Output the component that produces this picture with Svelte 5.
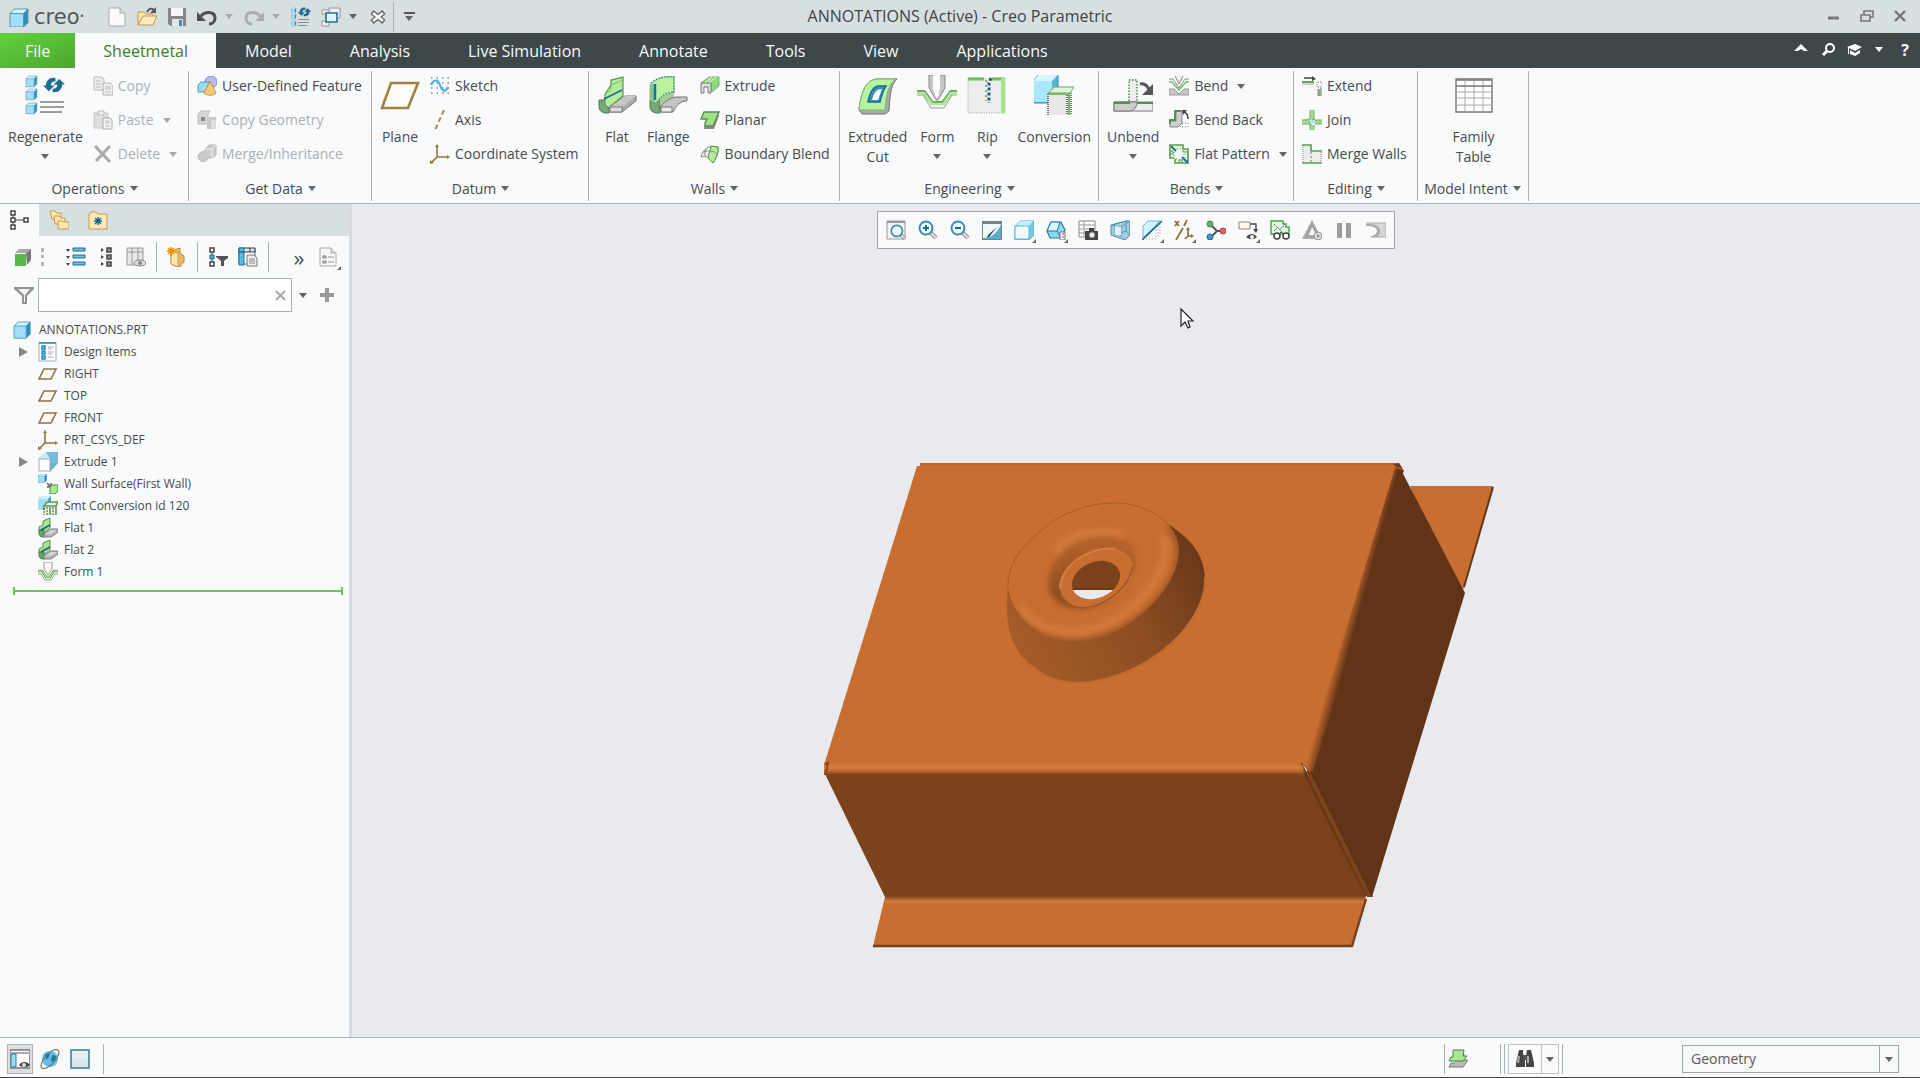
<script lang="ts">
	type Item = { icon: string; label: string; disabled?: boolean; menu?: boolean };
	type BigItem = { icon: string; lines: string[]; menu?: boolean };
	type Group = { id: string; title: string; big: BigItem[]; small: Item[] };

	const tabs = ['Model', 'Analysis', 'Live Simulation', 'Annotate', 'Tools', 'View', 'Applications'];

	const groups: Group[] = [
		{
			id: 'operations',
			title: 'Operations',
			big: [{ icon: 'regenerate', lines: ['Regenerate'], menu: true }],
			small: [
				{ icon: 'copy', label: 'Copy', disabled: true },
				{ icon: 'paste', label: 'Paste', disabled: true, menu: true },
				{ icon: 'delete', label: 'Delete', disabled: true, menu: true }
			]
		},
		{
			id: 'get-data',
			title: 'Get Data',
			big: [],
			small: [
				{ icon: 'udf', label: 'User-Defined Feature' },
				{ icon: 'copyGeom', label: 'Copy Geometry', disabled: true },
				{ icon: 'merge', label: 'Merge/Inheritance', disabled: true }
			]
		},
		{
			id: 'datum',
			title: 'Datum',
			big: [{ icon: 'plane', lines: ['Plane'] }],
			small: [
				{ icon: 'sketch', label: 'Sketch' },
				{ icon: 'axis', label: 'Axis' },
				{ icon: 'csys', label: 'Coordinate System' }
			]
		},
		{
			id: 'walls',
			title: 'Walls',
			big: [
				{ icon: 'flat', lines: ['Flat'] },
				{ icon: 'flange', lines: ['Flange'] }
			],
			small: [
				{ icon: 'extrude', label: 'Extrude' },
				{ icon: 'planar', label: 'Planar' },
				{ icon: 'blend', label: 'Boundary Blend' }
			]
		},
		{
			id: 'engineering',
			title: 'Engineering',
			big: [
				{ icon: 'cut', lines: ['Extruded', 'Cut'] },
				{ icon: 'form', lines: ['Form'], menu: true },
				{ icon: 'rip', lines: ['Rip'], menu: true },
				{ icon: 'conversion', lines: ['Conversion'] }
			],
			small: []
		},
		{
			id: 'bends',
			title: 'Bends',
			big: [{ icon: 'unbend', lines: ['Unbend'], menu: true }],
			small: [
				{ icon: 'bend', label: 'Bend', menu: true },
				{ icon: 'bendBack', label: 'Bend Back' },
				{ icon: 'flatPattern', label: 'Flat Pattern', menu: true }
			]
		},
		{
			id: 'editing',
			title: 'Editing',
			big: [],
			small: [
				{ icon: 'extend', label: 'Extend' },
				{ icon: 'join', label: 'Join' },
				{ icon: 'mergeWalls', label: 'Merge Walls' }
			]
		},
		{
			id: 'intent',
			title: 'Model Intent',
			big: [{ icon: 'family', lines: ['Family', 'Table'] }],
			small: []
		}
	];

	const tree = [
		{ icon: 'design', label: 'Design Items', expandable: true },
		{ icon: 'planeSmall', label: 'RIGHT' },
		{ icon: 'planeSmall', label: 'TOP' },
		{ icon: 'planeSmall', label: 'FRONT' },
		{ icon: 'csys', label: 'PRT_CSYS_DEF' },
		{ icon: 'solid', label: 'Extrude 1', expandable: true },
		{ icon: 'wall', label: 'Wall Surface(First Wall)' },
		{ icon: 'conversionSmall', label: 'Smt Conversion id 120' },
		{ icon: 'flatSmall', label: 'Flat 1' },
		{ icon: 'flatSmall', label: 'Flat 2' },
		{ icon: 'formSmall', label: 'Form 1' }
	];

	const viewTools = [
		{ icon: 'refit', label: 'Refit' },
		{ icon: 'zoomIn', label: 'Zoom In' },
		{ icon: 'zoomOut', label: 'Zoom Out' },
		{ icon: 'repaint', label: 'Repaint' },
		{ icon: 'shaded', label: 'Display Style', corner: true },
		{ icon: 'saved', label: 'Saved Orientations', corner: true },
		{ icon: 'manager', label: 'View Manager' },
		{ icon: 'perspective', label: 'Perspective View' },
		{ icon: 'section', label: 'Section', corner: true },
		{ icon: 'datums', label: 'Datum Display Filters', corner: true },
		{ icon: 'spin', label: 'Spin Center' },
		{ icon: 'anno', label: 'Annotation Display', corner: true },
		{ icon: 'preview', label: 'Flat Pattern Preview' },
		{ icon: 'simulate', label: 'Simulate' },
		{ icon: 'pause', label: 'Pause' },
		{ icon: 'region', label: 'Fluid Region' }
	];

	// icons drawn on a 40 unit grid, the others use 20
	const large = ['regenerate', 'plane', 'flat', 'flange', 'cut', 'form', 'rip', 'conversion', 'unbend', 'family'];

	const cube = (x: number, y: number, s: number) =>
		`<g transform="translate(${x} ${y}) scale(${s})"><path d="M0 3 3 0H12L9 3Z" fill="#d6f3fd"/><path d="M9 3 12 0V9L9 12Z" fill="#2e8cba"/><path d="M0 3H9V12H0Z" fill="#9fe0f8"/><path d="M0 3 3 0H12V9L9 12H0ZM0 3H9V12M9 3 12 0" fill="none" stroke="#4790b3" stroke-width=".6"/></g>`;
	const swirl = (x: number, y: number, s: number) =>
		`<g transform="translate(${x} ${y}) scale(${s})" fill="#1d6b8f"><path d="M1 9C1 4 5 0 11 1V5C8 4 6 6 6 9H10L4 15-2 9Z"/><path d="M18 8C18 13 14 17 8 16V12C11 13 13 11 13 8H9L15 2 21 8Z"/></g>`;
	const magnifier = `<path d="m12 12 6 6" stroke="#8d8d8d" stroke-width="4"/><path d="m12 12 6 6" stroke="#e5e5e5" stroke-width="2"/><circle cx="8" cy="8" r="6.5" fill="#eefaff" stroke="#3d8cae" stroke-width="2"/>`;

	const icons: Record<string, string> = {
		logo: cube(1, 2, 1.5),
		part: cube(2, 2, 1.35),
		newFile: '<path d="M2 1H13L18 6V19H2Z" fill="#fafafa" stroke="#a9a9a9"/><path d="M13 1V6H18" fill="#ddd" stroke="#a9a9a9"/>',
		open: '<path d="M1 18V5H7L9 7H16V9" fill="#ffe3a3" stroke="#c0964c"/><path d="M1 18 6 9H20L16 18Z" fill="#ffecc2" stroke="#c0964c"/><path d="M10 5C12 1 15 1 17 3" fill="none" stroke="#555" stroke-width="2"/><path d="M19 0V6H13Z" fill="#555"/>',
		save: '<path d="M1 1H19V19H4L1 17Z" fill="#868686"/><path d="M4 1H16V9H4Z" fill="#f3f5f6"/><path d="M5 12H16V19H5Z" fill="#d8eaf2"/><path d="M12 13H15V19H12Z" fill="#4f87a4"/>',
		undo: '<path d="M4 9C8 4 18 4 18 11 18 15 15 17 12 17" fill="none" stroke="#4b4f51" stroke-width="3"/><path d="M0 5V14H9Z" fill="#4b4f51"/>',
		redo: '<path d="M16 9C12 4 2 4 2 11 2 15 5 17 8 17" fill="none" stroke="#a9adaf" stroke-width="3"/><path d="M20 5V14H11Z" fill="#a9adaf"/>',
		regenSmall: cube(0, 1, 0.42) + cube(0, 7, 0.42) + cube(0, 14, 0.42) + swirl(8, 0, 0.58) + '<path d="M7 12.5H18M7 15.5H18M7 18.5H16" stroke="#8d8d8d"/>',
		windows: '<path d="M8 1H19V11H8Z" fill="#eee" stroke="#999"/><path d="M1 3H8V7H1ZM1 14H8V19H1Z" fill="#eee" stroke="#999"/><path d="M5 6H16V15H5Z" fill="#dff4fb" stroke="#246f91" stroke-width="1.6"/>',
		closeWin: '<path d="M4 5 16 15M16 5 4 15" stroke="#666" stroke-width="5"/><path d="M5 6 15 14M15 6 5 14" stroke="#f5f7f7" stroke-width="2.6"/>',
		regenerate:
			cube(1, 1, 0.9) + cube(1, 14, 0.9) + cube(1, 28, 0.9) + swirl(20, 2, 0.95) + '<path d="M15 27H39M15 32H39M15 37H37" stroke="#9d9d9d" stroke-width="2"/>',
		copy: '<path d="M1 1H9L11 3V14H1Z" fill="#eee" stroke="#bbb"/><path d="M3 5H8M3 8H8M3 11H8" stroke="#bbb"/><path d="M10 7H17L20 10V19H10Z" fill="#eee" stroke="#b0b0b0"/><path d="M12 11H18M12 13H18M12 16H18" stroke="#bbb"/>',
		paste: '<path d="M1 3H15V18H1Z" fill="#ddd" stroke="#c5c5c5"/><path d="M5 1H11V5H5Z" fill="#eee" stroke="#bbb"/><path d="M10 8H17L19 10V19H10Z" fill="#f4f4f4" stroke="#aaa"/><path d="M12 11H17M12 13H17M12 16H17" stroke="#bbb"/>',
		delete: '<path d="m2 2 15 16M17 2 3 17" stroke="#aaa" stroke-width="3"/>',
		udf: '<circle cx="14" cy="6" r="6" fill="#b5bdf0" stroke="#8288c0"/><path d="M1 9 4 6H12L9 16H1Z" fill="#9bdcf4" stroke="#4a9cc0"/><path d="M13 5 19 17C16 20 10 20 7 17Z" fill="#f4c87a" stroke="#c59240"/>',
		copyGeom: '<path d="M1 4 4 1H13L11 4V14H1Z" fill="#d5d5d5" stroke="#bbb"/><path d="M4 7H8V11H4Z" fill="#888"/><path d="M10 10 12 7H19V19H10Z" fill="#c9c9c9"/><path d="M14 10H19V19H14Z" fill="#dedede"/>',
		merge: '<path d="M8 5 12 1H19V11L15 14H11A5 5 0 1 1 8 8Z" fill="#ccc" stroke="#b5b5b5"/><path d="M8 5H15V14M15 5 19 1" stroke="#eee" fill="none"/>',
		plane: '<path d="M11 8H38L28 33H2Z" fill="#fdfbf5" stroke="#a18144" stroke-width="2.6"/>',
		planeSmall: '<path d="M6 5H18L13 15H1Z" fill="#fdfbf5" stroke="#8e7449" stroke-width="1.6"/>',
		sketch: '<path d="M1 2H19M1 7H19M1 12H19M1 17H19" stroke="#848b90" stroke-width="1.5" stroke-dasharray="1.5 4"/><path d="M1 9C4 3 8 3 10 9S15 17 18 11" fill="none" stroke="#43b3e4" stroke-width="2.2"/>',
		axis: '<path d="M14 0 5 20" stroke="#a88b51" stroke-width="2" stroke-dasharray="5 3"/>',
		csys: '<path d="M7 2V13H18M7 13 2 18" fill="none" stroke="#96743c" stroke-width="1.6"/><path d="M7 0 9 3H5ZM20 13 17 11V15ZM0 20V16L4 19Z" fill="#96743c"/>',
		flat: '<path d="M2 25H12V38H10C4 38 2 35 2 31Z" fill="#79a878" stroke="#4b7550"/><path d="M8 19 14 10V5L26 2V21L12 33 8 30Z" fill="#b2ed9c" stroke="#62985d" stroke-width="1.3"/><path d="M8 19 14 15 14 10 26 5" fill="none" stroke="#77bd68"/><path d="M7 24 25 15" stroke="#1a6c9a" stroke-width="1.8"/><path d="M13 32 28 21H39V26L25 37H13Z" fill="#aaa" stroke="#777"/><path d="M13 32 28 21H39L25 32Z" fill="#c7c7c7"/><path d="M13 32H25V37H13Z" fill="#ddd" stroke="#777"/><path d="M13 31 26 21" stroke="#476d46" stroke-dasharray="1 2"/>',
		flatSmall: '<path d="M1 9 5 7V3L12 0V10L6 15 1 13Z" fill="#a6e690" stroke="#568d52"/><path d="M1 12H6V19H5C2 19 1 17 1 15Z" fill="#6fa36c" stroke="#4b7550"/><path d="m3 12 9-5" stroke="#175f87" stroke-width="1.5"/><path d="M6 16 13 11H20V14L13 19H6Z" fill="#b5b5b5" stroke="#808080"/><path d="M7 16 13 12H19L13 16Z" fill="#d4d4d4"/>',
		flange: '<path d="M2 25H12V38H10C4 38 2 35 2 31Z" fill="#79a878" stroke="#4b7550"/><path d="M2 10C8 3 16 1 26 2V18C19 18 13 22 9 28L2 25Z" fill="#b9f19f" stroke="#86b880"/><path d="M2 10 7 9V26H2Z" fill="#8cc282"/><path d="M12 25C17 19 21 18 26 18V26L12 34Z" fill="#a3cd95"/><path d="M7 9V25" stroke="#0877a8" stroke-width="2.5"/><path d="M9 27C15 19 20 17 26 17M3 8C10 2 18 1 26 2V18" fill="none" stroke="#126990" stroke-dasharray="1 2" stroke-width="1.5"/><path d="M12 32C18 25 23 23 28 22H39V26C32 26 28 31 25 37H13Z" fill="#c3c3c3" stroke="#777"/><path d="M13 32H24V37H13Z" fill="#ececec" stroke="#777"/>',
		extrude: '<path d="M1 7 9 1H19V10L12 16 11 12V7Z" fill="#8bdc79" stroke="#82ad7a"/><path d="M1 7H11V17H8V11H4V17H1Z" fill="#ddd" stroke="#777"/><path d="m5 7 7-6M9 7 16 1" stroke="#e5fbd9"/>',
		planar: '<path d="M4 16H13L19 3V6L14 19H4Z" fill="#8c8c8c"/><path d="M4 2H19L13 16H5V13L7 9H1Z" fill="#a1df89" stroke="#578f50" stroke-width="1.4"/>',
		blend: '<path d="M1 13C3 5 8 1 18 3 19 9 16 14 13 19 10 14 5 11 1 13Z" fill="#f2f5f1" stroke="#888"/><path d="M11 2 18 3C19 9 16 14 13 19L8 14C8 9 11 7 11 2Z" fill="#b4ea9f" stroke="#4e9444"/><path d="M3 8C9 6 14 7 17 10M6 5C4 8 5 10 5 12" fill="none" stroke="#888"/>',
		cut: '<path d="M1 35C3 17 8 4 20 4H39C32 10 32 23 31 36L27 39H4Z" fill="#aaa" stroke="#777"/><path d="M1 35C3 17 8 4 20 4H38C29 10 28 24 27 35Z" fill="#b9f29f" stroke="#77b36d"/><path d="M10 27C12 17 15 11 21 11H28C24 17 23 22 22 27Z" fill="#3892bd" stroke="#166b91" stroke-width="1.5"/><path d="M14 25C16 17 19 14 24 14L20 25Z" fill="#fafcff"/>',
		form: '<path d="M12 0V13L19 25H21L28 13V0Z" fill="#c6c6c6" stroke="#888"/><path d="M16 0H23V14L21 23H19L16 14Z" fill="#fafafa"/><path d="M0 20H6L14 33H27L35 20H40" fill="none" stroke="#999"/><path d="M0 17H7L15 28H26L34 17H40" fill="none" stroke="#6d9c65" stroke-width="4"/><path d="M0 18H7L15 29H26L34 18H40" fill="none" stroke="#abed90" stroke-width="2.6"/>',
		formSmall: '<path d="M6 0V7L10 13 14 7V0Z" fill="#fafafa" stroke="#999"/><path d="M0 12H3L7 18H13L17 12H20" fill="none" stroke="#999"/><path d="M0 9H4L8 15H12L16 9H20" fill="none" stroke="#6faa63" stroke-width="2.6"/><path d="M0 9H4L8 15H12L16 9H20" fill="none" stroke="#a7e58e"/>',
		rip: '<path d="M1 3H18L20 6 24 3H38V38H1Z" fill="#ededed" stroke="#969696" stroke-dasharray="1 1.5"/><path d="M1 4H17M25 4H38" stroke="#72bd61" stroke-width="3"/><path d="M36 3V38" stroke="#9ee887" stroke-width="4"/><path d="M19 5V26" stroke="#7fb477" stroke-width="2" stroke-dasharray="2 3"/><path d="M24 3 22 8V28" stroke="#1a6382" fill="none" stroke-width="3" stroke-dasharray="3 2"/>',
		conversion: '<path d="M0 5 4 0H24V23L18 28H0Z" fill="#58b4db" stroke="#3183ab"/><path d="M0 6H18V27H0Z" fill="#a7e7ff"/><path d="M0 5 4 0H24L18 6H0Z" fill="#d7f5ff"/><path d="M14 40V19L20 12H40L36 18V40Z" fill="#e7e7e7"/><path d="M14 40V19M33 20V40M37 18V40" stroke="#444" stroke-width="1.4" stroke-dasharray="1 1"/><path d="M14 19 20 12H40L36 18H14Z" fill="#e0f6d6" stroke="#6ea364"/><path d="M15 19H35V40" fill="none" stroke="#77bc69" stroke-width="2"/>',
		conversionSmall: '<path d="M0 0H13V11L10 14H0Z" fill="#4ba7cf"/><path d="M0 3H10V14H0Z" fill="#9fe0f8"/><path d="M0 0H13L10 3H0Z" fill="#cdf1fc"/><path d="M6 19V10L9 6H20L18 10V19Z" fill="#eaf3e7"/><path d="M6 10 9 6H20L18 10ZM6 10V14M12 11V19M18 10V19" fill="none" stroke="#5c9c50" stroke-width="1.6"/><path d="M6 12V19M9 11V19M15 11V19" stroke="#444" stroke-dasharray="2 1"/>',
		unbend: '<path d="M16 5H24V27H16Z" fill="#eee" stroke="#51794a" stroke-width="1.4" stroke-dasharray="1.5 1.5"/><path d="M1 27H40V36H1Z" fill="#ededed" stroke="#777"/><path d="M1 27H24C24 32 21 36 16 36H1Z" fill="#ccc" stroke="#777"/><path d="M1 28H17M24 28H40" stroke="#55914b" stroke-width="2"/><path d="M27 9C32 8 35 11 37 17" fill="none" stroke="#555" stroke-width="3"/><path d="M40 9V20H29Z" fill="#555"/>',
		bend: '<path d="M6 0 10 8 14 0" fill="#eee" stroke="#888"/><path d="M0 3H4L10 12 16 3H20" fill="none" stroke="#8b8b8b"/><path d="M0 6H3L10 14 17 6H20" fill="none" stroke="#77c35e" stroke-width="1.6"/><path d="M0 19V13H5L10 18 15 13H20V19Z" fill="#c5c5c5" stroke="#999"/>',
		bendBack: '<path d="M1 15V11H7V1H13V13L9 17H1Z" fill="#cecece" stroke="#888"/><path d="M1 14V10H6V1H12" fill="none" stroke="#4d9548" stroke-width="2"/><path d="M13 13H19V17H11Z" fill="none" stroke="#777" stroke-dasharray="1 2"/><path d="M15 2C18 3 19 6 19 9" fill="none" stroke="#444" stroke-width="1.5"/><path d="M13 0H18L14 5Z" fill="#444"/>',
		flatPattern: '<path d="M1 1H14V5H19V19H6V14H1Z" fill="#e6f5dd" stroke="#55a146" stroke-width="1.6"/><path d="M5 5H15V15H5Z" fill="#f3f6f7" stroke="#777" stroke-dasharray="1 2"/><path d="M1 7H4V10H1M10 19V16H13V19M14 5V8H19" stroke="#55a146"/><path d="m2 2 5 5M13 13 19 19" stroke="#1472a3" stroke-width="1.8"/>',
		extend: '<path d="M0 6H12V9H0Z" fill="#d0d0d0"/><path d="M0 6H12" stroke="#5eaa4d" stroke-width="2"/><path d="M2 2H11" stroke="#444" stroke-width="1.5"/><path d="m10 0 4 3-4 2Z" fill="#444"/><path d="M15 6V11H20V6Z" fill="none" stroke="#777" stroke-dasharray="1 1"/><path d="M17 13V20" stroke="#999" stroke-width="3"/><path d="M19 12V20" stroke="#4f9c3e"/>',
		join: '<path d="M10 0V7C10 11 7 12 0 12M0 12H20M10 7V20" fill="none" stroke="#8e9d89" stroke-width="5"/><path d="M10 0V7C10 11 7 12 0 12M0 12H20M10 7V20" fill="none" stroke="#99e47e" stroke-width="3"/><path d="M8 10H13V15H8Z" fill="#e6f4f8"/><path d="M7 13 13 8M8 15 14 10" stroke="#197cad" stroke-dasharray="1 1"/>',
		mergeWalls: '<path d="M1 1H9V8H20V19H1Z" fill="#ededed"/><path d="M1 1V19M19 8V19" stroke="#8b8b8b" stroke-dasharray="1 1"/><path d="M0 1H9V7H20M0 19H20" stroke="#57a049" stroke-width="1.6"/><path d="M9 8V19" stroke="#777" stroke-dasharray="2 2"/>',
		family: '<path d="M2 4H38V37H2Z" fill="#fff" stroke="#777" stroke-width="1.4"/><path d="M2 17H38M2 23H38M2 30H38M11 4V37M20 4V37M29 4V37" stroke="#aaa"/><path d="M2 5H38M2 11H38" stroke="#777" stroke-width="1.6"/>',
		modelTree: '<path d="M1 1H5V5H1ZM1 8H5V12H1ZM1 15H5V19H1ZM14 8H18V12H14Z" fill="#fff" stroke="#444" stroke-width="1.5"/><path d="M3 5V8M3 12V15M5 10H14" stroke="#444"/>',
		folders: '<g fill="#ffe6a9" stroke="#c29a4e"><path d="M1 1H6L8 3H12V9H3Z"/><path d="M5 6H10L12 8H16V14H6Z"/><path d="M9 11H13L15 12H20V19H9Z"/></g>',
		favorites: '<path d="M1 5 3 2H8L10 4H19V19H1Z" fill="#ffe9b5" stroke="#c29a4e"/><path d="M10 7V15M6 11H14M7 8 13 14M13 8 7 14" stroke="#16698e" stroke-width="1.4"/>',
		greenCube: '<path d="M2 7H13V19H2Z" fill="#54b948"/><path d="M2 6 6 2H18L13 6Z" fill="#aaa"/><path d="M13 6 18 2V13L14 18Z" fill="#777"/>',
		list: '<path d="M0 2H4L2 5ZM0 9H4L2 12ZM0 16H4L2 19Z" fill="#444"/><path d="M7 1H19V4H7ZM7 8H19V11H7ZM7 15H19V18H7Z" fill="#6bc3e7" stroke="#226988"/>',
		collapse: '<path d="m5 1 3 2-3 2ZM5 8 8 10 5 12ZM5 15 8 17 5 19Z" fill="#444"/><path d="M11 1H15V5H11ZM11 8H15V12H11ZM11 15H15V19H11Z" fill="#999" stroke="#444" stroke-width="1.5"/>',
		columns: '<path d="M1 1H17V18H1Z" fill="#e7e7e7" stroke="#999"/><path d="M1 5H17M6 1V18M12 1V18" stroke="#999"/><ellipse cx="14" cy="16" rx="6" ry="3" fill="#ddd" stroke="#888"/><circle cx="14" cy="16" r="2" fill="#888"/>',
		settings: '<path d="M4 4 13 1V6L17 9V15L14 17V19L10 20 4 17Z" fill="#e5ba68" stroke="#bd8b36"/><path d="M4 4 11 6V20L4 17Z" fill="#ffe6aa" stroke="#cc9f52"/><path d="M4 0V9M0 4H8M1 1 7 7M7 1 1 7" stroke="#f18f00" stroke-width="1.5"/>',
		treeFilter: '<path d="M2 1H6V5H2ZM2 15H6V19H2Z" fill="#fff" stroke="#444" stroke-width="1.5"/><path d="M2 8H6V12H2Z" fill="#48b4df" stroke="#236987"/><path d="M4 5V8M4 12V15" stroke="#444"/><path d="M8 9H20V11L16 14V19H13V14L8 10Z" fill="#555"/>',
		treeColumns: '<path d="M1 2H17V17H1Z" fill="#fff" stroke="#2c7896"/><path d="M1 1H17V5H1Z" fill="#d7ecf4" stroke="#333"/><path d="M1 1H6V18H1Z" fill="#53bcea" stroke="#226c8c"/><path d="M12 1V5M1 5H6" stroke="#333"/><path d="M9 8H16L19 11V19H9Z" fill="#eee" stroke="#777"/><path d="M11 12H17M11 14H17M11 16H17" stroke="#888"/>',
		doc: '<path d="M1 1H12L17 6V19H1Z" fill="#f7f7f7" stroke="#aaa"/><path d="M12 1V6H17" fill="#ddd" stroke="#aaa"/><path d="M4 9H7V11H4ZM4 14H7V16H4Z" fill="none" stroke="#777"/><path d="M9 10H15M9 15H15" stroke="#999"/>',
		filter: '<path d="M0 2H20V4L13 11V19H8V11L0 4Z" fill="#929292"/><path d="M4 4H16L11 10V17H10V10Z" fill="#f3f3f3"/>',
		design: '<path d="M1 0H18V19H1Z" fill="#fff" stroke="#9db2bb"/><path d="M1 1H18" stroke="#4f9ebc" stroke-width="2"/><path d="M4 4H7V7H4ZM4 9H7V12H4ZM4 14H7V17H4Z" fill="#7fd2f1" stroke="#188dbc" stroke-width="1.4"/><path d="M10 5H16M10 7H14M10 10H16M10 12H14M10 15H16" stroke="#aaa"/>',
		solid: '<path d="M0 6 8 0H20L12 7H0Z" fill="#c8eafa"/><path d="M12 7 20 0V11L12 20Z" fill="#63b1d1"/><path d="M8 0H20V11H12V7Z" fill="#78bbd8"/><path d="M1 7H12V19H1Z" fill="#fcfcfc" stroke="#aaa"/>',
		wall: cube(0, 0, 0.72) + '<path d="M9 9 12 12M13 9V13H9" fill="none" stroke="#555" stroke-width="1.4"/><path d="M12 13 14 11H20V17L17 20H12Z" fill="#a9e88e" stroke="#4b8e43"/>',
		refit: '<path d="M1 1H19V19H1Z" fill="#f4f4f4" stroke="#999"/><path d="M1 2H19" stroke="#999" stroke-width="2"/><g transform="translate(4 4) scale(.86)">' + magnifier + '</g>',
		zoomIn: magnifier + '<path d="M5 8H11M8 5V11" stroke="#176b94" stroke-width="2"/>',
		zoomOut: magnifier + '<path d="M5 8H11" stroke="#176b94" stroke-width="2"/>',
		repaint: '<path d="M0 1H20V20H0Z" fill="#7a8385"/><path d="M1 4H19V19H1Z" fill="#58afca"/><path d="M1 4H19C16 12 10 18 1 18Z" fill="#f0fafd"/><path d="M15 7 7 17 5 18 6 15Z" fill="#174d68"/>',
		shaded: '<path d="M1 6 6 1H20V15L15 20H1Z" fill="#7ac6df" stroke="#58abc8"/><path d="M1 6 6 1H19L15 6Z" fill="#c5eefa"/><path d="M1 6H15V19H1Z" fill="#eefaff" stroke="#63b8d6"/>',
		saved: '<path d="M1 11 5 2H15L19 10 15 18H4Z" fill="#8bd5ef" stroke="#277da0" stroke-width="1.2"/><path d="M1 11H11L14 2H5Z" fill="#ddf5fd" stroke="#277da0"/><path d="M11 11 15 18" stroke="#277da0"/><path d="M14 12H19V20H14Z" fill="#f4f4f4" stroke="#777"/><path d="M16 14H18M16 17H18" stroke="#666"/>',
		manager: '<path d="M1 1H17V17H1Z" fill="#fff" stroke="#888"/><path d="M6 1V17M1 5H17M1 9H17M1 13H17" stroke="#999"/><path d="M7 11H20V20H7ZM11 8H16V11H11Z" fill="#444"/><circle cx="14" cy="15" r="3" fill="#eee" stroke="#777"/>',
		perspective: '<path d="M1 5 16 1H20V15L15 20 1 15Z" fill="#9ccddf" stroke="#4c8ca6"/><path d="M1 5 11 7V17M11 7 20 1M5 4V15M5 4 16 1V11L5 15M16 11 20 15" fill="none" stroke="#4c8ca6" stroke-width=".8"/><path d="M5 6 11 7V15H5Z" fill="#e0f4fb"/>',
		section: '<path d="M1 6 6 1H18L1 18Z" fill="#d5f3fc" stroke="#69b7d7"/><path d="M4 19H14V7M16 16V5M18 14V3" fill="none" stroke="#999" stroke-dasharray="1 2"/><path d="M0 20 20 1" stroke="#176287" stroke-width="1.6"/>',
		datums: '<path d="M1 1 5 6M5 1 1 6M13 0 10 6M9 8 2 20M14 9V16H18M14 16 11 19" fill="none" stroke="#8d6c31" stroke-width="1.7" /><path d="M14 7 16 10H12ZM20 16 17 14V18Z" fill="#8d6c31"/>',
		spin: '<path d="M4 4 11 11H18M11 11 4 18" fill="none" stroke="#555" stroke-width="1.8"/><circle cx="4" cy="4" r="3" fill="#6aaf67" stroke="#48824a"/><circle cx="17" cy="11" r="3" fill="#db6465" stroke="#af4546"/><circle cx="4" cy="17" r="3" fill="#4a97bb" stroke="#226b93"/>',
		anno: '<path d="M1 2H12V9H1Z" fill="#fffae3" stroke="#888"/><path d="M12 4H18V11" fill="none" stroke="#444" stroke-width="1.3"/><path d="M15 9H20L18 13ZM8 17C12 13 16 13 19 17 15 20 12 20 8 17Z" fill="#444"/><circle cx="14" cy="17" r="2" fill="#eee"/>',
		preview: '<path d="M1 1H13V4H16V7H19V14H1Z" fill="#e8f9e0" stroke="#46a444" stroke-width="1.4"/><path d="M4 4 12 12M14 6 9 10M4 11 8 7" stroke="#39728b" stroke-dasharray="2 1"/><circle cx="7" cy="16" r="3" fill="#fff" stroke="#444" stroke-width="1.5"/><circle cx="16" cy="16" r="3" fill="#fff" stroke="#444" stroke-width="1.5"/><path d="M9 14 11 12 14 14" stroke="#444" fill="none"/>',
		simulate: '<path d="M10 0 20 19H0Z" fill="#aaa"/><path d="M10 5 16 16H5Z" fill="#ddd" stroke="#888"/><path d="m10 9 3 6H8Z" fill="#fff"/><circle cx="16" cy="16" r="4" fill="#ddd" stroke="#999"/><path d="m15 14 3 2-3 2Z" fill="#888"/>',
		pause: '<path d="M3 3H8V18H3ZM12 3H17V18H12Z" fill="#9c9c9c"/>',
		region: '<path d="M0 3H20V17H4Z" fill="#d5d6d7"/><path d="M0 3H20V17H5" stroke="#b0b0b0"/><path d="M0 6C8 6 12 8 12 11 12 14 7 16 2 17L0 17Z" fill="#f8fafc"/><path d="M0 6C8 6 11 8 11 11 11 14 8 16 4 17H10C13 16 14 13 14 11 14 7 10 4 3 4H0Z" fill="#a9a9a9"/>',
		panels: '<path d="M0 1H20V19H0Z" fill="#fff" stroke="#777" stroke-width="1.5"/><path d="M0 4H20" stroke="#aaa" stroke-width="2"/><path d="M1 5H6V18H1Z" fill="#9cdcf2" stroke="#237ca1"/><path d="M9 16C12 12 17 12 20 16 17 19 12 19 9 16Z" fill="#444"/><circle cx="14" cy="16" r="2" fill="#ddd"/>',
		globe: '<circle cx="10" cy="10" r="8" fill="#63bce5"/><path d="M5 5 10 4 9 8 6 11ZM12 6 16 7 15 13 11 12Z" fill="#1b759f"/><ellipse cx="10" cy="10" rx="12" ry="5" transform="rotate(-48 10 10)" stroke="#777" stroke-width="1.2"/>',
		blank: '<path d="M1 1H19V19H1Z" fill="#dce8ef" stroke="#37799a" stroke-width="1.5"/><path d="M2 2H18V9H2Z" fill="#e6eff4"/>',
		regenState: '<path d="M5 5H16L15 11H20L15 18H1L3 14H7" fill="#b9bab7" stroke="#777"/><path d="M5 1H16L15 7H19L15 12H1L3 8H5Z" fill="#a8e892" stroke="#438641"/>',
		find: '<path d="M4 1H8V5L10 7V18H1V14ZM12 1H16L19 14V18H11V7Z" fill="#444"/><path d="M8 6H12V11H8Z" fill="#555"/><path d="M4 7 3 14M13 7V14" stroke="#aaa" stroke-width="2"/>'
	};
</script>

{#snippet icon(name: string, size = 20)}
	<svg
		class="icon"
		width={size}
		height={size}
		viewBox={large.includes(name) ? '0 0 40 40' : '0 0 20 20'}
		fill="none"
		aria-hidden="true"
	>
		{@html icons[name]}
	</svg>
{/snippet}

{#snippet quick(name: string, label: string)}
	<button type="button" class="tool" aria-label={label}>{@render icon(name)}</button>
{/snippet}

<div class="app">
	<header class="titlebar">
		<div class="quick-access">
			<span class="logo">{@render icon('logo')}creo<sup>•</sup></span>
			{@render quick('newFile', 'New')}
			{@render quick('open', 'Open')}
			{@render quick('save', 'Save')}
			{@render quick('undo', 'Undo')}
			<span class="arrow faint"></span>
			{@render quick('redo', 'Redo')}
			<span class="arrow faint"></span>
			{@render quick('regenSmall', 'Regenerate model')}
			{@render quick('windows', 'Windows')}
			<span class="arrow"></span>
			{@render quick('closeWin', 'Close window')}
			<span class="rule"></span>
			<button type="button" class="customize" aria-label="Customize toolbar"><span class="arrow"></span></button>
		</div>
		<h1>ANNOTATIONS (Active) - Creo Parametric</h1>
		<div class="window-controls">
			<button type="button" class="tool" aria-label="Minimize">
				<svg width="14" height="14" viewBox="0 0 14 14"><path d="M1 9H12" stroke="#777" stroke-width="3" /></svg>
			</button>
			<button type="button" class="tool" aria-label="Restore">
				<svg width="14" height="14" viewBox="0 0 14 14" fill="none" stroke="#777" stroke-width="1.6">
					<path d="M4 6V2H13V8H10M1 6H10V12H1Z" />
				</svg>
			</button>
			<button type="button" class="tool" aria-label="Close">
				<svg width="14" height="14" viewBox="0 0 14 14"><path d="M2 2 12 12M12 2 2 12" stroke="#777" stroke-width="2.4" /></svg>
			</button>
		</div>
	</header>

	<nav class="tabs">
		<button type="button" class="tab file">File</button>
		<button type="button" class="tab active">Sheetmetal</button>
		{#each tabs as tab}
			<button type="button" class="tab">{tab}</button>
		{/each}
		<div class="tab-tools">
			<button type="button" class="tool" aria-label="Minimize ribbon">
				<svg width="14" height="14" viewBox="0 0 14 14"><path d="M0 8 7 1 14 8H10L7 6 4 8Z" fill="#fff" /></svg>
			</button>
			<button type="button" class="tool" aria-label="Search commands">
				<svg width="14" height="14" viewBox="0 0 14 14" fill="none" stroke="#fff">
					<circle cx="8" cy="5" r="4" stroke-width="2" /><path d="M5 8 1 12" stroke-width="3" />
				</svg>
			</button>
			<button type="button" class="tool learn" aria-label="Learning">
				<svg width="16" height="14" viewBox="0 0 16 14">
					<path d="M0 4 8 1 15 4 8 8ZM3 7 8 10 13 7V10L8 13 3 11ZM1 4H2V11H1Z" fill="#fff" />
				</svg>
				<span class="arrow light"></span>
			</button>
			<button type="button" class="tool help" aria-label="Help">?</button>
		</div>
	</nav>

	<div class="ribbon">
		{#each groups as group}
			<section class="group {group.id}">
				<div class="group-body">
					{#each group.big as item}
						<button type="button" class="big">
							{@render icon(item.icon, 40)}
							<span class="big-label">
								{#each item.lines as line}<span>{line}</span>{/each}
							</span>
							{#if item.menu}<span class="arrow"></span>{/if}
						</button>
					{/each}
					{#if group.small.length}
						<div class="small-column">
							{#each group.small as item}
								<button type="button" class="small" disabled={item.disabled}>
									{@render icon(item.icon)}
									<span>{item.label}</span>
									{#if item.menu}<span class="arrow"></span>{/if}
								</button>
							{/each}
						</div>
					{/if}
				</div>
				<button type="button" class="group-title">{group.title}<span class="arrow"></span></button>
			</section>
		{/each}
	</div>

	<main>
		<aside>
			<div class="panel-tabs">
				<button type="button" class="panel-tab selected" aria-label="Model Tree">{@render icon('modelTree')}</button>
				<button type="button" class="panel-tab" aria-label="Folder Browser">{@render icon('folders')}</button>
				<button type="button" class="panel-tab" aria-label="Favorites">{@render icon('favorites')}</button>
			</div>
			<div class="tree-tools">
				{@render quick('greenCube', 'Model')}
				<span class="grip"></span>
				{@render quick('list', 'Expand all')}
				{@render quick('collapse', 'Collapse all')}
				{@render quick('columns', 'Tree columns')}
				<span class="rule"></span>
				{@render quick('settings', 'Settings')}
				<span class="rule"></span>
				{@render quick('treeFilter', 'Tree filters')}
				{@render quick('treeColumns', 'Column display')}
				<span class="rule"></span>
				<button type="button" class="tool more" aria-label="More">»</button>
				<button type="button" class="tool corner" aria-label="Show">{@render icon('doc')}</button>
			</div>
			<div class="search-row">
				{@render icon('filter')}
				<div class="search-box">
					<input type="text" aria-label="Filter tree" />
					<button type="button" class="tool" aria-label="Clear">
						<svg width="12" height="12" viewBox="0 0 12 12"><path d="M2 2 11 11M11 2 2 11" stroke="#a5a5a5" stroke-width="1.8" /></svg>
					</button>
				</div>
				<span class="arrow"></span>
				<button type="button" class="tool add" aria-label="Add filter">
					<svg width="14" height="14" viewBox="0 0 14 14"><path d="M7 0V14M0 7H14" stroke="#999" stroke-width="4" /></svg>
				</button>
			</div>
			<ul class="tree">
				<li class="root">{@render icon('part')}<span>ANNOTATIONS.PRT</span></li>
				{#each tree as node}
					<li>
						<span class="expander">{#if node.expandable}<span class="triangle"></span>{/if}</span>
						{@render icon(node.icon)}
						<span>{node.label}</span>
					</li>
				{/each}
			</ul>
			<div class="insert-bar"></div>
		</aside>

		<div class="canvas">
			<svg class="scene" viewBox="352 204 1568 833" role="img" aria-label="Sheetmetal part">
				<defs>
					<linearGradient id="bend" x1="0" y1="0" x2="0" y2="1">
						<stop offset="0" stop-color="#c86f30" />
						<stop offset=".35" stop-color="#d57b40" />
						<stop offset=".7" stop-color="#b9652c" />
						<stop offset="1" stop-color="#7c431c" />
					</linearGradient>
					<linearGradient id="sideBend" gradientUnits="userSpaceOnUse" x1="1347" y1="615" x2="1358" y2="618">
						<stop offset="0" stop-color="#c76e30" />
						<stop offset="1" stop-color="#613317" />
					</linearGradient>
					<linearGradient id="foot" x1="0" y1="0" x2="0" y2="1">
						<stop offset="0" stop-color="#7c431c" />
						<stop offset=".7" stop-color="#d57b40" />
						<stop offset="1" stop-color="#c86f30" />
					</linearGradient>
					<linearGradient id="skirt" gradientUnits="userSpaceOnUse" x1="1020" y1="640" x2="1195" y2="550">
						<stop offset="0" stop-color="#a45b27" />
						<stop offset=".55" stop-color="#8e4e22" />
						<stop offset="1" stop-color="#6b391a" />
					</linearGradient>
					<linearGradient id="recess" gradientUnits="userSpaceOnUse" x1="1060" y1="610" x2="1120" y2="530">
						<stop offset="0" stop-color="#7c431c" />
						<stop offset=".5" stop-color="#a45926" />
						<stop offset="1" stop-color="#bd682d" />
					</linearGradient>
					<filter id="soft" x="-20%" y="-20%" width="140%" height="140%"><feGaussianBlur stdDeviation="3" /></filter>
					<clipPath id="crown">
						<path d="M1115 503C1140 503 1158 514 1168 524 1186 544 1180 572 1157 599 1134 625 1104 641 1074 641 1034 641 1010 612 1008 585 1008 559 1029 539 1053 521 1073 509 1093 503 1115 503Z" />
					</clipPath>
					<clipPath id="hole"><ellipse cx="1096" cy="580" rx="25" ry="18" transform="rotate(-23 1096 580)" /></clipPath>
				</defs>

				<path d="M1410 486H1493L1464 589 1440 570Z" fill="#c86e30" />
				<path d="M1493 487 1464 587" stroke="#643719" stroke-width="2" />
				<path d="M1399 466 1465 593 1372 897 1303 772Z" fill="#613317" />
				<path d="M917 466H920V463H1399L1403 470 1310 772 1304 775H824V765Z" fill="#c76e30" />
				<path d="M921 464H1399" stroke="#ad602a" />
				<path d="M1395 468 1404 470 1313 772 1304 768Z" fill="url(#sideBend)" />
				<path d="M1393 464 1399 463 1403 469 1396 467Z" fill="#743d1a" />
				<rect x="824" y="763" width="480" height="12" fill="url(#bend)" />
				<path d="M825 774H1306L1366 897H885Z" fill="#7c421b" />
				<path d="M1303 768 1311 772 1373 897H1367L1304 774Z" fill="#7d431d" />
				<path d="M1305 773 1366 896M1311 772 1372 896" fill="none" stroke="#5b3115" stroke-width="1.5" />
				<path d="M1301 763 1307 773 1308 770 1304 765Z" fill="#f4ddca" stroke="#6b391a" />
				<path d="M825 764 828 763 826 773" fill="none" stroke="#8a4a20" stroke-width="2" />
				<path d="M885 897H1366L1352 946H873Z" fill="#c86e30" />
				<rect x="885" y="896" width="480" height="8" fill="url(#foot)" />
				<path d="M1366 899 1352 946H873" fill="none" stroke="#75401d" stroke-width="2.4" />

				<path
					d="M1008 585C1005 615 1007 638 1023 658 1038 675 1057 683 1077 683 1116 682 1152 663 1178 637 1198 615 1206 594 1205 577 1203 555 1193 540 1168 524Z"
					fill="url(#skirt)"
				/>
				<path d="M1023 658C1038 675 1057 683 1077 683 1116 682 1152 663 1178 637 1198 615 1206 594 1205 577" fill="none" stroke="#c16b30" stroke-width="2" />
				<g clip-path="url(#crown)">
					<rect x="1000" y="495" width="190" height="155" fill="#c86e30" />
					<path
						d="M1012 612C1026 634 1050 643 1074 643 1104 643 1136 627 1159 601 1182 574 1188 546 1170 526"
						fill="none"
						stroke="#9a5425"
						stroke-width="9"
						filter="url(#soft)"
					/>
					<path d="M1020 606C1034 628 1056 634 1084 631 1112 626 1138 607 1154 582 1164 566 1168 550 1164 536" fill="none" stroke="#d67d42" stroke-width="6" filter="url(#soft)" />
				</g>
				<path d="M1008 585C1008 559 1029 539 1053 521 1073 509 1093 503 1115 503 1140 503 1158 514 1168 524" fill="none" stroke="#a75c28" />
				<ellipse cx="1092" cy="571" rx="47" ry="33" transform="rotate(-30 1092 571)" fill="url(#recess)" filter="url(#soft)" />
				<path d="M1055 552C1068 534 1101 526 1123 535" fill="none" stroke="#d98146" stroke-width="5" filter="url(#soft)" />
				<ellipse cx="1097" cy="578" rx="39" ry="27" transform="rotate(-27 1097 578)" fill="#c86e30" />
				<path d="M1060 589C1061 563 1093 545 1116 549" fill="none" stroke="#d67d42" stroke-width="2" />
				<path d="M1133 566C1130 585 1109 606 1083 608 1070 608 1062 601 1060 593" fill="none" stroke="#9b5526" stroke-width="1.5" />
				<g clip-path="url(#hole)">
					<rect x="1068" y="555" width="56" height="35" fill="#7c421b" />
					<path d="M1068 589H1124" stroke="#5d3114" />
					<rect x="1068" y="590" width="56" height="14" fill="#e9eaee" />
				</g>

				<path d="M1181 309V326L1185 322 1188 328 1190 327 1188 321H1193Z" fill="#fff" stroke="#222" stroke-width="1.2" />
			</svg>
			<div class="view-toolbar">
				{#each viewTools as tool}
					<button type="button" class="tool" class:corner={tool.corner} aria-label={tool.label}>{@render icon(tool.icon)}</button>
				{/each}
			</div>
		</div>
	</main>

	<footer>
		<button type="button" class="status-button pressed" aria-label="Toggle panels">{@render icon('panels')}</button>
		<button type="button" class="status-button" aria-label="Browser">{@render icon('globe')}</button>
		<button type="button" class="status-button" aria-label="Full screen">{@render icon('blank')}</button>
		<span class="rule"></span>
		<div class="status-right">
			<span class="rule"></span>
			<span class="regen-state">{@render icon('regenState')}</span>
			<span class="rule"></span>
			<span class="rule"></span>
			<div class="split">
				<button type="button" aria-label="Find">{@render icon('find')}</button>
				<button type="button" aria-label="Find options"><span class="arrow"></span></button>
			</div>
			<span class="rule"></span>
		</div>
		<div class="select-box">
			<select aria-label="Selection filter">
				<option>Geometry</option>
			</select>
			<span class="select-arrow"><span class="arrow"></span></span>
		</div>
	</footer>
</div>

<style>
	:global(body) {
		margin: 0;
	}
	.app {
		display: flex;
		flex-direction: column;
		min-height: 100vh;
		box-sizing: border-box;
		border-bottom: 1px solid #4a484a;
		background: #f8fafc;
		color: #474b4d;
		font: 14px/20px 'Open Sans', 'Noto Sans', sans-serif;
	}
	button {
		border: 0;
		padding: 0;
		background: none;
		color: inherit;
		font: inherit;
		white-space: nowrap;
	}
	.icon {
		display: block;
		flex: none;
	}
	.tool {
		position: relative;
		display: flex;
		flex: none;
		align-items: center;
		justify-content: center;
		min-width: 20px;
		height: 20px;
	}
	.corner::after {
		content: '';
		position: absolute;
		right: -2px;
		bottom: -3px;
		border: 2px solid;
		border-color: transparent #666 #666 transparent;
	}
	.arrow {
		flex: none;
		width: 0;
		height: 0;
		border: 4px solid transparent;
		border-top: 5px solid #606466;
		border-bottom: 0;
	}
	.arrow.faint {
		border-top-color: #a5abad;
	}
	.arrow.light {
		border-top-color: #fff;
	}
	.rule {
		width: 1px;
		height: 30px;
		flex: none;
		background: #abb0b2;
	}

	.titlebar {
		display: grid;
		grid-template-columns: 1fr auto 1fr;
		align-items: center;
		height: 33px;
		background: #d7dfe1;
	}
	.quick-access {
		display: flex;
		align-items: center;
		gap: 10px;
		padding-left: 9px;
	}
	.quick-access > .arrow {
		margin: 0 1px 0 -2px;
	}
	.logo {
		display: flex;
		align-items: center;
		gap: 5px;
		width: 88px;
		color: #52585a;
		font: 21px/24px 'DejaVu Sans', sans-serif;
	}
	.logo sup {
		margin-left: -5px;
		font-size: 8px;
		line-height: 14px;
	}
	.quick-access .rule {
		margin-left: -5px;
	}
	.customize {
		width: 11px;
		border-top: 2px solid #555;
		padding: 2px 0 0 1px;
	}
	.customize .arrow {
		display: block;
	}
	h1 {
		margin: 0;
		padding-bottom: 2px;
		color: #3f4446;
		font-size: 16px;
		font-weight: 400;
	}
	.window-controls {
		display: flex;
		justify-content: flex-end;
		gap: 13px;
		padding: 0 10px 2px 0;
	}

	.tabs {
		display: flex;
		height: 35px;
		background: #3e4749;
		color: #f7f9f9;
		font-size: 16px;
	}
	.tab {
		padding: 0 29px;
	}
	.tab.file {
		padding: 0 25px;
		background: linear-gradient(160deg, #62d13e, #4ba72f);
	}
	.tab.active {
		padding: 0 28px;
		background: #f8fafc;
		color: #3f7d25;
	}
	.tab-tools {
		display: flex;
		align-items: center;
		gap: 8px;
		margin-left: auto;
		padding: 0 9px 2px 0;
	}
	.learn {
		gap: 12px;
	}
	.help {
		margin-left: 8px;
		min-width: 12px;
		font-weight: 700;
	}

	.ribbon {
		display: flex;
		height: 135px;
		border-bottom: 1px solid #b1b6b9;
		background: #f8fafc;
	}
	.group {
		position: relative;
		display: flex;
		flex-direction: column;
		box-sizing: border-box;
		padding: 0 6px 0 8px;
	}
	.group::after {
		content: '';
		position: absolute;
		inset: 3px 0 2px auto;
		width: 1px;
		background: #aaaeb0;
	}
	.operations {
		min-width: 189px;
	}
	.get-data {
		min-width: 183px;
	}
	.datum {
		min-width: 217px;
	}
	.walls {
		min-width: 251px;
	}
	.engineering {
		min-width: 259px;
	}
	.bends {
		min-width: 195px;
	}
	.editing {
		min-width: 124px;
	}
	.intent {
		min-width: 111px;
		padding: 0 6px;
	}
	.group-body {
		display: flex;
		flex: 1;
		gap: 10px;
	}
	.intent .group-body {
		justify-content: center;
	}
	.big {
		display: flex;
		flex-direction: column;
		align-items: center;
		min-width: 40px;
		padding-top: 7px;
	}
	.big-label {
		display: flex;
		flex-direction: column;
		margin-top: 12px;
	}
	.big .arrow {
		margin-top: 7px;
	}
	.small-column {
		display: flex;
		flex-direction: column;
		padding-top: 1px;
	}
	.small {
		display: flex;
		align-items: center;
		gap: 5px;
		height: 34px;
	}
	.small .arrow {
		margin-left: 4px;
	}
	.small:disabled {
		color: #adb0b2;
	}
	.small:disabled .arrow {
		border-top-color: #a5a8aa;
	}
	.group-title {
		display: flex;
		align-items: center;
		justify-content: center;
		gap: 5px;
		height: 29px;
		padding-right: 2px;
	}

	main {
		display: flex;
		flex: 1;
	}
	aside {
		width: 349px;
		flex: none;
		border-right: 3px solid #d8dbe0;
		background: #f8fafb;
	}
	.panel-tabs {
		display: flex;
		height: 32px;
		background: #d7dfe1;
	}
	.panel-tab {
		display: flex;
		align-items: center;
		justify-content: center;
		width: 39px;
	}
	.selected {
		background: #f8fafb;
	}
	.tree-tools {
		display: flex;
		align-items: center;
		gap: 10px;
		height: 41px;
		padding: 0 10px 0 13px;
	}
	.grip {
		height: 18px;
		margin: 0 12px 0 -2px;
		border-left: 3px dotted #b5b8b9;
	}
	.more {
		margin-left: auto;
		font-size: 22px;
	}
	.search-row {
		display: flex;
		align-items: center;
		padding: 1px 12px 0 14px;
	}
	.search-box {
		display: flex;
		flex: 1;
		align-items: center;
		min-width: 0;
		height: 32px;
		margin: 0 7px 0 4px;
		padding-right: 1px;
		border: 1px solid #a8b1b3;
		background: #fff;
	}
	.search-box input {
		flex: 1;
		min-width: 0;
		border: 0;
		outline: 0;
		background: none;
		font: inherit;
	}
	.add {
		margin-left: 10px;
	}
	.tree {
		margin: 7px 0 0;
		padding: 0;
		list-style: none;
		font-size: 12px;
	}
	.tree li {
		display: flex;
		align-items: center;
		gap: 6px;
		height: 22px;
		padding-left: 19px;
	}
	.tree li.root {
		gap: 7px;
		padding-left: 12px;
	}
	.expander {
		width: 13px;
	}
	.triangle {
		display: block;
		width: 0;
		height: 0;
		border: 5px solid transparent;
		border-left: 9px solid #858889;
		border-right: 0;
	}
	.insert-bar {
		height: 8px;
		margin: 4px 6px 0 13px;
		border: solid #68c857;
		border-width: 0 2px;
		background: linear-gradient(#68c857, #68c857) center / 100% 2px no-repeat;
	}

	.canvas {
		position: relative;
		flex: 1;
		min-width: 0;
		background: #e9eaee;
	}
	.scene {
		position: absolute;
		inset: 0;
		width: 100%;
		height: 100%;
	}
	.view-toolbar {
		position: relative;
		display: flex;
		gap: 12px;
		width: fit-content;
		margin: 7px auto 0;
		padding: 8px;
		border: 1px solid #a0a4a6;
		background: #f8fafc;
	}

	footer {
		display: flex;
		align-items: center;
		height: 36px;
		padding: 3px 21px 0 7px;
		border-top: 1px solid #b1b6b9;
		background: #f8fafb;
	}
	.status-button {
		padding: 4px 2px;
		margin-right: 4px;
		border: 1px solid transparent;
	}
	.pressed {
		border-color: #adb1b3;
		background: #dcdfe1;
	}
	.status-button + .rule {
		margin-left: 6px;
	}
	.status-right {
		display: flex;
		align-items: center;
		gap: 3px;
		margin-left: auto;
	}
	.regen-state {
		width: 49px;
	}
	.split {
		display: flex;
		border: 1px solid #bfc3c5;
	}
	.split button {
		display: flex;
		align-items: center;
		padding: 4px 6px;
	}
	.split button + button {
		padding: 4px;
		border-left: 1px solid #bfc3c5;
	}
	.select-box {
		position: relative;
		width: 217px;
		margin-left: 119px;
	}
	select {
		display: block;
		width: 100%;
		height: 28px;
		padding: 0 28px 0 8px;
		appearance: none;
		border: 1px solid #a0a5a7;
		border-radius: 0;
		background: #f8f9f9;
		color: #55595b;
		font: inherit;
	}
	.select-arrow {
		position: absolute;
		inset: 1px 1px 1px auto;
		display: flex;
		align-items: center;
		padding: 0 5px;
		border-left: 1px solid #a0a5a7;
		pointer-events: none;
	}
</style>
